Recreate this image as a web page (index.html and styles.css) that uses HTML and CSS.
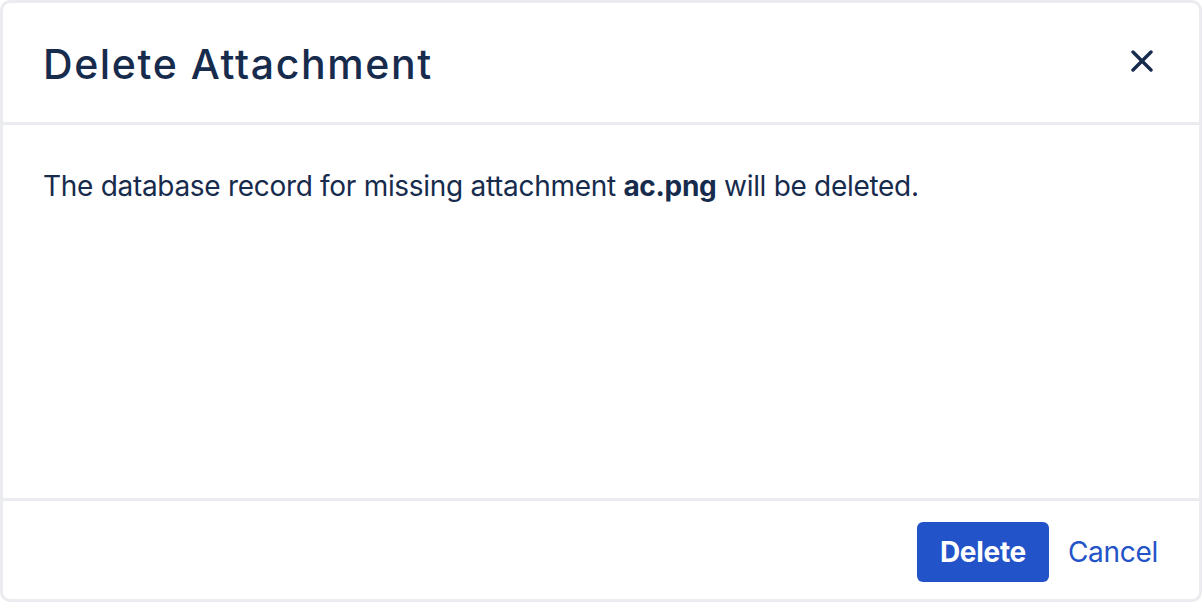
FILE: index.html
```html
<!DOCTYPE html>
<html lang="en">
<head>
<meta charset="utf-8">
<title>Delete Attachment</title>
<link rel="stylesheet" href="styles.css">
</head>
<body>
<div class="dialog">
  <header class="dialog-header">
    <h1 class="dialog-title">Delete Attachment</h1>
    <button class="close-btn" type="button" aria-label="Close">
      <svg width="22" height="22" viewBox="0 0 22 22" aria-hidden="true">
        <line x1="2" y1="2" x2="20" y2="20"/>
        <line x1="20" y1="2" x2="2" y2="20"/>
      </svg>
    </button>
  </header>
  <main class="dialog-body">
    <p class="message">The database record for missing attachment <strong>ac.png</strong> will be deleted.</p>
  </main>
  <footer class="dialog-footer">
    <button class="btn btn-primary" type="button">Delete</button>
    <button class="btn btn-link" type="button">Cancel</button>
  </footer>
</div>
</body>
</html>
```
FILE: styles.css
```css
* { box-sizing: border-box; }
html, body { margin: 0; padding: 0; background: #ffffff; }
body {
  font-family: Inter, "Noto Sans", "Liberation Sans", sans-serif;
  color: #172b4d;
}
.dialog {
  width: 1202px;
  height: 602px;
  border: 3px solid #ebecf0;
  border-radius: 10px;
  display: flex;
  flex-direction: column;
  background: #fff;
}
.dialog-header {
  height: 122px;
  flex: none;
  display: flex;
  align-items: center;
  justify-content: space-between;
  padding: 2px 46px 0 40px;
  border-bottom: 3px solid #ebecf0;
}
.dialog-title {
  margin: 0;
  font-size: 41px;
  line-height: 48px;
  font-weight: 500;
  letter-spacing: 1.6px;
  color: #172b4d;
}
.close-btn {
  background: none;
  border: 0;
  padding: 0;
  width: 22px;
  height: 22px;
  margin-bottom: 6px;
  cursor: pointer;
  display: flex;
}
.close-btn line {
  stroke: #172b4d;
  stroke-width: 3.4;
  stroke-linecap: round;
}
.dialog-body {
  flex: 1;
  padding: 41px 40px 0 40px;
}
.message {
  margin: 0;
  font-size: 28px;
  line-height: 40px;
  letter-spacing: -0.3px;
  color: #172b4d;
}
.message strong { font-weight: 700; }
.dialog-footer {
  height: 101px;
  flex: none;
  border-top: 3px solid #ebecf0;
  display: flex;
  justify-content: flex-end;
  align-items: center;
  gap: 4px;
  padding: 4px 26px 0 40px;
}
.btn {
  font-family: inherit;
  font-size: 28px;
  height: 60px;
  border: 0;
  border-radius: 6px;
  cursor: pointer;
  line-height: 60px;
  letter-spacing: -0.3px;
}
.btn-primary {
  background: #2353c8;
  color: #fff;
  font-weight: 700;
  padding: 0 23px;
}
.btn-link {
  background: none;
  color: #2353c8;
  font-weight: 400;
  padding: 0 15px;
}
```
